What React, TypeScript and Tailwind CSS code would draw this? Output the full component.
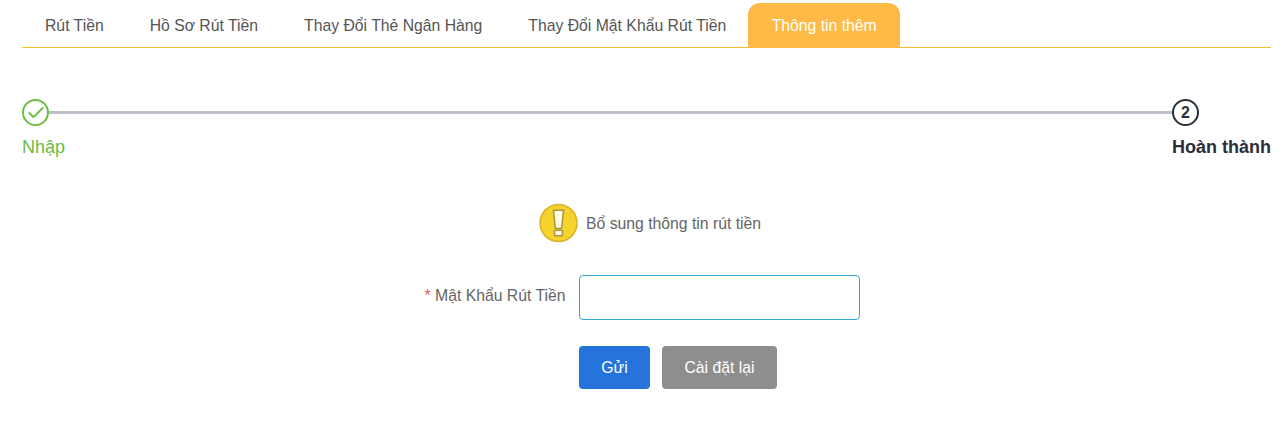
import { Check } from "lucide-react";

const TABS = [
  "Rút Tiền",
  "Hồ Sơ Rút Tiền",
  "Thay Đổi Thẻ Ngân Hàng",
  "Thay Đổi Mật Khẩu Rút Tiền",
];

export default function App() {
  return (
    <div className="h-[425px] w-[1285px] overflow-hidden bg-white pl-[22px] pr-[14px] pt-[3px] font-['Liberation_Sans',Arial,sans-serif]">
      {/* Tabs */}
      <div className="flex h-[45px] border-b border-[#f5bd30]">
        {TABS.map((tab) => (
          <div key={tab} className="h-[44px] px-[23px] pt-[13px] text-[15.75px] leading-[19px] text-[#555]">
            {tab}
          </div>
        ))}
        <div className="-ml-px h-[45px] w-[152px] rounded-t-[12px] bg-[#ffba45] pt-[13px] text-center text-[15.75px] leading-[19px] text-white">
          Thông tin thêm
        </div>
      </div>

      {/* Steps */}
      <div className="mt-[51px] flex items-start justify-between">
        <div className="flex-1">
          <div className="flex items-center">
            <div className="grid h-[27px] w-[27px] shrink-0 place-items-center rounded-full border-[2.5px] border-[#6cbb45]">
              <Check className="h-[20px] w-[20px] text-[#6cbb45]" strokeWidth={2.4} />
            </div>
            <div className="h-[3px] flex-1 bg-[#c0c0cb]" />
          </div>
          <div className="mt-[11px] text-lg leading-[21px] text-[#6cbb45]">Nhập</div>
        </div>
        <div className="w-[99px]">
          <div className="grid h-[27px] w-[27px] place-items-center rounded-full border-[2.5px] border-[#2b2f3a] text-base font-bold leading-none text-[#2b2f3a]">
            2
          </div>
          <div className="mt-[11px] whitespace-nowrap text-lg font-bold leading-[21px] text-[#2b2f3a]">Hoàn thành</div>
        </div>
      </div>

      {/* Notice */}
      <div className="ml-[517px] mt-[45px] flex items-center gap-[8px]">
        <svg width="39" height="40" viewBox="0 0 40 40" className="shrink-0">
          <circle cx="20" cy="20" r="19" fill="#f5d22c" stroke="#d9b32a" strokeWidth="1.6" />
          <path d="M14.8 7h10.4l-2 18.5h-6.4z" fill="#fffbe0" stroke="#a8923f" strokeWidth="1.5" strokeLinejoin="round" />
          <rect x="16" y="27.5" width="8" height="5.5" rx="0.8" fill="#fffbe0" stroke="#a8923f" strokeWidth="1.5" />
        </svg>
        <span className="text-[15.75px] leading-[19px] text-[#666]">Bổ sung thông tin rút tiền</span>
      </div>

      {/* Form */}
      <div className="mt-[32px] flex">
        <label className="w-[543.5px] pt-[11px] text-right text-[15.75px] leading-[19px] text-[#666]">
          <span className="text-[#e25c5c]">*</span> Mật Khẩu Rút Tiền
        </label>
        <input className="ml-[13.5px] h-[45px] w-[281px] rounded-[4px] border border-[#2fa6d6] bg-white outline-none" />
      </div>
      <div className="ml-[557px] mt-[26px] flex gap-3">
        <button className="h-[43px] w-[71px] rounded-[4px] bg-[#2474dc] text-[15.75px] text-white">Gửi</button>
        <button className="h-[43px] w-[115px] rounded-[4px] bg-[#8e8e8e] text-[15.75px] text-white">Cài đặt lại</button>
      </div>
    </div>
  );
}
